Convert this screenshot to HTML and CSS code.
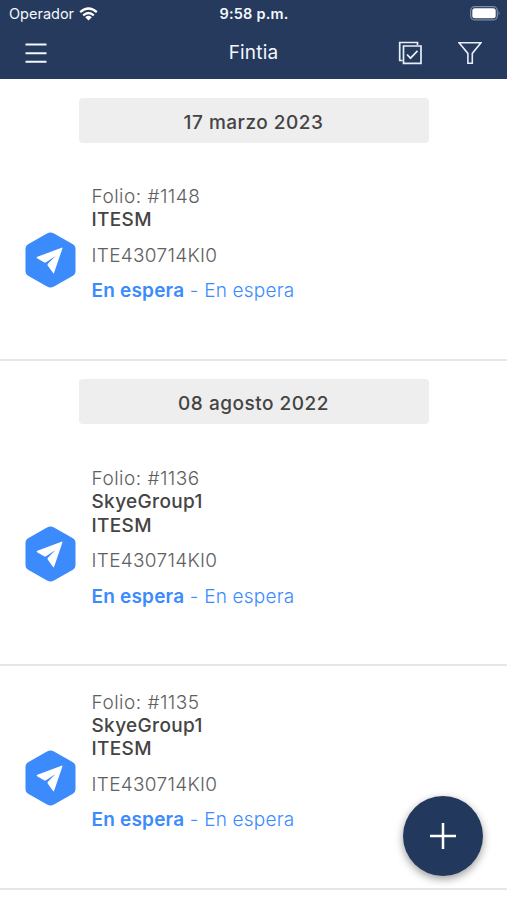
FILE: index.html
```html
<!DOCTYPE html>
<html lang="es">
<head>
<meta charset="utf-8">
<meta name="viewport" content="width=device-width, initial-scale=1">
<title>Fintia</title>
<link rel="stylesheet" href="styles.css">
</head>
<body>
<svg width="0" height="0" class="defs" aria-hidden="true">
  <symbol id="send" viewBox="0 0 50 56">
    <path d="M21.5 1.500 Q25 -.5 28.500 1.500 L47 12 Q50 13.700 50 17 V39 Q50 42.300 47 44 L28.500 54.500 Q25 56.500 21.500 54.500 L3 44 Q0 42.300 0 39 V17 Q0 13.700 3 12 Z" fill="#3c8bfc"/>
    <path d="M36 15.700 Q37.100 15.200 36.900 16.400 L28.700 40.500 Q28.100 42.200 27.200 40.600 L22.200 33.400 Q21.700 32.600 22.400 31.800 L30 24 L20.600 30.200 Q19.600 30.900 18.500 30.200 L11.600 26.300 Q10.500 25.400 11.900 24.800 Z" fill="#fff"/>
  </symbol>
</svg>
<header class="header">
  <div class="status">
    <div class="carrier"><span>Operador</span>
      <svg width="19" height="14" viewBox="0 0 19 14" fill="none" stroke="#fff" stroke-width="2.300"><path d="M1.200 5.100Q9.500-2 17.800 5.100M4.200 8.300Q9.500 3.700 14.800 8.300"/><path d="M6.200 10.200Q9.500 7.500 12.800 10.200L9.500 13.600Z" fill="#fff" stroke="none"/></svg>
    </div>
    <div class="clock">9:58 p.m.</div>
    <svg class="battery" width="31" height="15" viewBox="0 0 31 15"><rect x=".7" y=".7" width="26.600" height="13.200" rx="4" fill="none" stroke="#7f8ba1" stroke-width="1.300"/><rect x="2.300" y="2.300" width="23.400" height="10" rx="2.500" fill="#fff"/><path d="M28.600 5Q30.500 7.300 28.600 9.600Z" fill="#7f8ba1"/></svg>
  </div>
  <nav class="nav">
    <svg class="menu" width="22" height="22" viewBox="0 0 22 22" stroke="#f4f8fc" stroke-width="2"><path d="M.5 2.500H21.500M.5 11.200H21.500M.5 19.800H21.500"/></svg>
    <h1 class="title">Fintia</h1>
    <div class="actions">
      <svg width="24" height="24" viewBox="0 0 24 24" fill="none" stroke="#e6eef8" stroke-width="1.700"><path d="M19.500 4V1.500H1.700V19.500H4.500"/><path d="M5.500 5H23V22.300H5.500ZM9 13.500L12.500 17.200L19.500 9.800"/></svg>
      <svg width="24" height="24" viewBox="0 0 24 24" fill="none" stroke="#e6eef8" stroke-width="1.600"><path d="M1 1.800H23L14.300 12.400V22.300H9.900V12.400Z"/></svg>
    </div>
  </nav>
</header>
<main>
  <section class="group">
    <h2 class="date">17 marzo 2023</h2>
    <article class="item">
      <svg class="badge"><use href="#send"/></svg>
      <div class="info">
        <p class="folio">Folio: #1148</p>
        <p class="name">ITESM</p>
        <p class="rfc">ITE430714KI0</p>
        <p class="state"><b>En espera</b> - En espera</p>
      </div>
    </article>
  </section>
  <section class="group">
    <h2 class="date">08 agosto 2022</h2>
    <article class="item">
      <svg class="badge"><use href="#send"/></svg>
      <div class="info">
        <p class="folio">Folio: #1136</p>
        <p class="name">SkyeGroup1</p>
        <p class="name">ITESM</p>
        <p class="rfc">ITE430714KI0</p>
        <p class="state"><b>En espera</b> - En espera</p>
      </div>
    </article>
    <article class="item">
      <svg class="badge"><use href="#send"/></svg>
      <div class="info">
        <p class="folio">Folio: #1135</p>
        <p class="name">SkyeGroup1</p>
        <p class="name">ITESM</p>
        <p class="rfc">ITE430714KI0</p>
        <p class="state"><b>En espera</b> - En espera</p>
      </div>
    </article>
  </section>
</main>
<button class="fab" aria-label="Agregar"><svg width="28" height="28" viewBox="0 0 28 28" stroke="#fff" stroke-width="2.500"><path d="M14 1V27M1 14H27"/></svg></button>
</body>
</html>
```
FILE: styles.css
```css
* { box-sizing: border-box; }
body {
  margin: 0;
  height: 900px;
  overflow: hidden;
  background: #fff;
  color: #444;
  font-family: Inter, "Liberation Sans", sans-serif;
  font-size: 19px;
}
h1, h2, p { margin: 0; }
svg { display: block; flex: none; }
.defs { position: absolute; }

.header { height: 79px; background: #253a5c; color: #f4f8fc; }
.status {
  display: grid;
  grid-template-columns: 1fr auto 1fr;
  align-items: center;
  height: 27px;
  padding: 0 6px 0 7px;
  font-size: 14.5px;
}
.carrier { display: flex; align-items: center; gap: 5px; padding-left: 2px; }
.clock { font-weight: 600; letter-spacing: .2px; }
.battery { justify-self: end; }
.nav {
  display: grid;
  grid-template-columns: 1fr auto 1fr;
  align-items: center;
  height: 51px;
  padding: 0 25px;
}
.title { font-size: 19px; font-weight: 400; letter-spacing: .2px; }
.actions { display: flex; justify-content: flex-end; gap: 36px; }

.date {
  width: 350px;
  height: 45px;
  margin: 0 auto 18px;
  border-radius: 4px;
  background: #eee;
  font-size: 19px;
  font-weight: 500;
  line-height: 50px;
  letter-spacing: .5px;
  text-align: center;
}
.group { padding-top: 18.5px; }
.item {
  display: flex;
  align-items: center;
  gap: 15.5px;
  padding: 24.5px 25px 56px;
  border-bottom: 2px solid #e6e6e6;
}
.badge { width: 51px; height: 56px; position: relative; top: 16.5px; }
.info { line-height: 23.4px; }
.folio, .rfc { color: #606060; font-weight: 300; letter-spacing: .3px; }
.folio { letter-spacing: .48px; }
.name { font-weight: 500; letter-spacing: .35px; }
.rfc, .state { margin-top: 12.1px; }
.state { color: #3c8bfc; font-weight: 300; letter-spacing: .2px; }
.state b { font-weight: 600; }

.fab {
  position: fixed;
  right: 24px;
  bottom: 24px;
  display: grid;
  place-items: center;
  width: 80px;
  height: 80px;
  border: 0;
  border-radius: 50%;
  background: #22395d;
  box-shadow: 0 3px 9px rgba(0, 0, 0, .4);
}
```
